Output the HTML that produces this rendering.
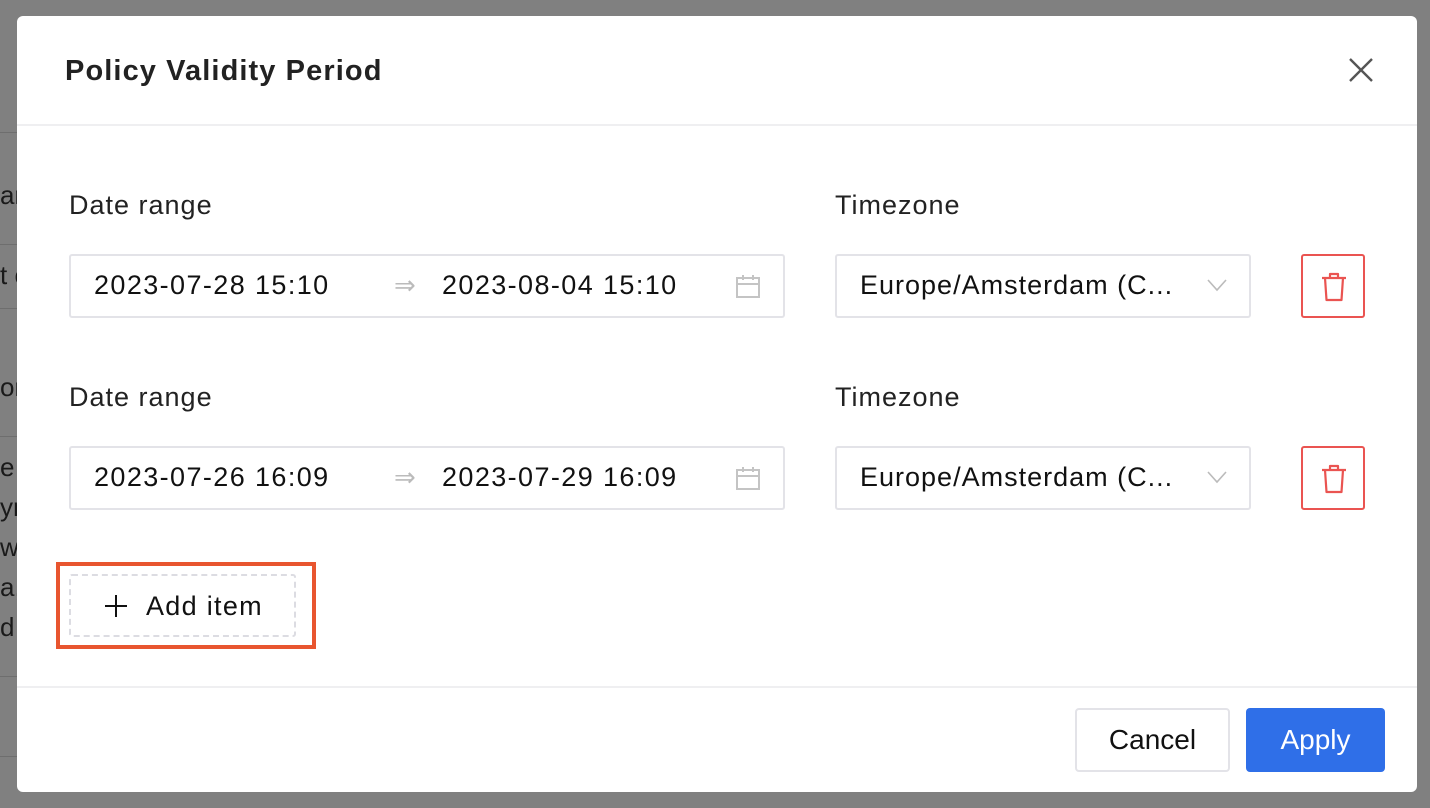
<!DOCTYPE html>
<html><head><meta charset="utf-8"><style>
*{box-sizing:border-box;margin:0;padding:0}
body{width:1430px;height:808px;background:#808080;position:relative;overflow:hidden;font-family:"Liberation Sans",sans-serif;color:#111}
.bgt{position:absolute;left:0;font-size:26px;color:#1a1a1a}
.bgl{position:absolute;left:0;width:17px;height:1px;background:#6e6e6e}
.modal{position:absolute;left:17px;top:16px;width:1400px;height:776px;background:#fff;border-radius:6px}
.title{position:absolute;left:48px;top:39px;font-size:29px;font-weight:bold;color:#222;letter-spacing:1.1px}
.close{position:absolute;left:1330px;top:40px}
.hline{position:absolute;left:0;width:1400px;height:2px;background:#efeff1}
.lbl{position:absolute;font-size:27px;color:#222;letter-spacing:1px}
.inp{position:absolute;height:64px;border:2px solid #e3e3e8;border-radius:3px;background:#fff}
.txt{position:absolute;top:14px;font-size:27px;color:#111;letter-spacing:1.4px}
.del{position:absolute;width:64px;height:64px;border:2px solid #ea5451;border-radius:3px}
.btn{position:absolute;border-radius:4px;font-size:28px;text-align:center}
</style></head><body>
<div class="bgl" style="top:132px"></div>
<div class="bgt" style="top:180px">an</div>
<div class="bgl" style="top:244px"></div>
<div class="bgt" style="top:260px">t c</div>
<div class="bgl" style="top:308px"></div>
<div class="bgt" style="top:372px">on</div>
<div class="bgl" style="top:436px"></div>
<div class="bgt" style="top:452px">e c</div>
<div class="bgt" style="top:492px">yn</div>
<div class="bgt" style="top:532px">w</div>
<div class="bgt" style="top:572px">a,</div>
<div class="bgt" style="top:612px">d</div>
<div class="bgl" style="top:676px"></div>
<div class="bgl" style="top:756px"></div>
<div class="modal">
 <div class="title">Policy Validity Period</div>
 <svg class="close" width="28" height="28" viewBox="0 0 28 28"><path d="M3 3L25 25M25 3L3 25" stroke="#555" stroke-width="2.4"/></svg>
 <div class="hline" style="top:108px"></div>

 <div class="lbl" style="left:52px;top:174px">Date range</div>
 <div class="lbl" style="left:818px;top:174px">Timezone</div>
 <div class="inp" style="left:52px;top:238px;width:716px">
  <div class="txt" style="left:23px">2023-07-28 15:10</div>
  <div class="txt" style="left:323px;color:#bbb;font-size:26px;letter-spacing:0">⇒</div>
  <div class="txt" style="left:371px">2023-08-04 15:10</div>
  <svg style="position:absolute;left:664px;top:18px" width="26" height="26" viewBox="0 0 26 26"><rect x="2" y="4" width="22" height="19" fill="none" stroke="#c4c4c4" stroke-width="2"/><path d="M2 10H24M8 1V6M18 1V6" stroke="#c4c4c4" stroke-width="2"/></svg>
 </div>
 <div class="inp" style="left:818px;top:238px;width:416px">
  <div class="txt" style="left:23px;letter-spacing:1px">Europe/Amsterdam (C...</div>
  <svg style="position:absolute;left:370px;top:22px" width="20" height="14" viewBox="0 0 20 14"><path d="M1 2L10 12L19 2" fill="none" stroke="#bbb" stroke-width="1.6"/></svg>
 </div>
 <div class="del" style="left:1284px;top:238px"><svg style="position:absolute;left:18px;top:16px" width="26" height="30" viewBox="0 0 26 30"><path d="M1 6H25M9 6V2H17V6M4 6L5.5 28H20.5L22 6" fill="none" stroke="#ea5451" stroke-width="2.2" stroke-linejoin="round"/></svg></div>

 <div class="lbl" style="left:52px;top:366px">Date range</div>
 <div class="lbl" style="left:818px;top:366px">Timezone</div>
 <div class="inp" style="left:52px;top:430px;width:716px">
  <div class="txt" style="left:23px">2023-07-26 16:09</div>
  <div class="txt" style="left:323px;color:#bbb;font-size:26px;letter-spacing:0">⇒</div>
  <div class="txt" style="left:371px">2023-07-29 16:09</div>
  <svg style="position:absolute;left:664px;top:18px" width="26" height="26" viewBox="0 0 26 26"><rect x="2" y="4" width="22" height="19" fill="none" stroke="#c4c4c4" stroke-width="2"/><path d="M2 10H24M8 1V6M18 1V6" stroke="#c4c4c4" stroke-width="2"/></svg>
 </div>
 <div class="inp" style="left:818px;top:430px;width:416px">
  <div class="txt" style="left:23px;letter-spacing:1px">Europe/Amsterdam (C...</div>
  <svg style="position:absolute;left:370px;top:22px" width="20" height="14" viewBox="0 0 20 14"><path d="M1 2L10 12L19 2" fill="none" stroke="#bbb" stroke-width="1.6"/></svg>
 </div>
 <div class="del" style="left:1284px;top:430px"><svg style="position:absolute;left:18px;top:16px" width="26" height="30" viewBox="0 0 26 30"><path d="M1 6H25M9 6V2H17V6M4 6L5.5 28H20.5L22 6" fill="none" stroke="#ea5451" stroke-width="2.2" stroke-linejoin="round"/></svg></div>

 <div style="position:absolute;left:39px;top:546px;width:260px;height:87px;border:4px solid #e8552f"></div>
 <div style="position:absolute;left:52px;top:558px;width:227px;height:63px;border:2px dashed #dcdce2;border-radius:3px">
  <svg style="position:absolute;left:34px;top:19px" width="22" height="22" viewBox="0 0 22 22"><path d="M11 0V22M0 11H22" stroke="#111" stroke-width="2"/></svg>
  <div style="position:absolute;left:75px;top:15px;font-size:27px;color:#111;letter-spacing:1.3px">Add item</div>
 </div>

 <div class="hline" style="top:670px"></div>
 <div class="btn" style="left:1058px;top:692px;width:155px;height:64px;border:2px solid #e3e3e8;line-height:60px;color:#111">Cancel</div>
 <div class="btn" style="left:1229px;top:692px;width:139px;height:64px;background:#2f6fe8;color:#fff;line-height:64px">Apply</div>
</div>
</body></html>
